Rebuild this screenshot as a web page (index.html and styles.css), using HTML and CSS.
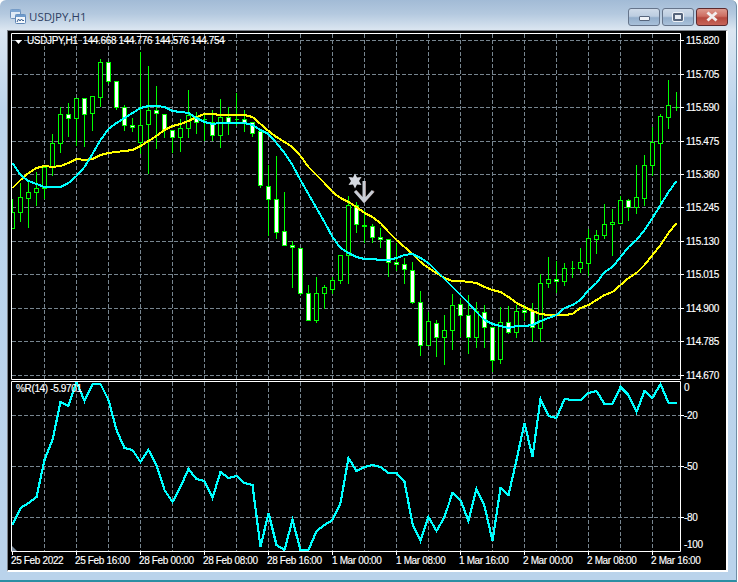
FILE: index.html
```html
<!DOCTYPE html>
<html lang="en">
<head>
<meta charset="utf-8">
<title>USDJPY,H1</title>
<link rel="stylesheet" href="styles.css">
</head>
<body>
<div class="window">
  <header class="titlebar">
    <svg class="app-icon" width="16" height="15" viewBox="0 0 16 15">
      <rect x="0.5" y="0.5" width="10" height="9" rx="1" fill="#dfeaf6" stroke="#6f93bd"/>
      <rect x="0.5" y="0.5" width="10" height="2.5" fill="#7ea6d2"/>
      <rect x="5.5" y="5.5" width="10" height="9" rx="1" fill="#f4f8fc" stroke="#5f86b5"/>
      <rect x="5.5" y="5.5" width="10" height="2.5" fill="#6f9bcc"/>
      <path d="M7 13l1.5-3 1.5 2 1.5-2 1.5 2 1-1" fill="none" stroke="#3a5f8f"/>
    </svg>
    <span class="title">USDJPY,H1</span>
    <div class="controls">
      <button class="ctl"><span class="glyph-min"></span></button>
      <button class="ctl"><span class="glyph-max"></span></button>
      <button class="ctl ctl-close">
        <svg width="14" height="11" viewBox="0 0 14 11"><path d="M2.5 1.5l9 8M11.5 1.5l-9 8" stroke="#f2eeee" stroke-width="3" fill="none"/></svg>
      </button>
    </div>
  </header>
  <main class="panel">
    <svg id="chart" class="chart" width="719" height="541" viewBox="8 31 719 541">
      <defs>
        <clipPath id="main-clip"><rect x="12" y="34" width="668" height="345"/></clipPath>
        <clipPath id="sub-clip"><rect x="12" y="382" width="668" height="169"/></clipPath>
      </defs>
      <g id="grid"></g>
      <g id="candles" clip-path="url(#main-clip)"></g>
      <g id="lines-main" clip-path="url(#main-clip)"></g>
      <g id="lines-sub" clip-path="url(#sub-clip)"></g>

      <g class="marks">
        <polygon class="star" points="355,173.5 357,177.5 361.5,177 359,181 361.5,185 357,184.5 355,188.5 353,184.5 348.5,185 351,181 348.5,177 353,177.5"/>
        <path class="arrow-fringe" d="M365 181v21M356 191l9 10 9-10"/>
        <path class="arrow" d="M364 181v21M355 191l9 10 9-10"/>
      </g>

      <path class="frame" d="M11.5 33.5H680.5V379.5H11.5ZM11.5 381.5H680.5V551.5H11.5Z"/>
      <path id="ticks" class="frame"></path>
      <polygon class="drop" points="15,40 22,40 18.5,44"/>
      <polygon class="shift" points="12,546 17,551 12,551"/>

      <text class="lbl" x="27" y="44">USDJPY,H1  144.668 144.776 144.576 144.754</text>
      <text class="lbl" x="16" y="392">%R(14) -5.9701</text>

      <g class="lbl">
        <text x="686" y="44">115.820</text>
        <text x="686" y="78">115.705</text>
        <text x="686" y="111">115.590</text>
        <text x="686" y="145">115.475</text>
        <text x="686" y="178">115.360</text>
        <text x="686" y="211">115.245</text>
        <text x="686" y="245">115.130</text>
        <text x="686" y="278">115.015</text>
        <text x="686" y="312">114.900</text>
        <text x="686" y="345">114.785</text>
        <text x="686" y="379">114.670</text>
        <text x="684" y="391">0</text>
        <text x="684" y="419">-20</text>
        <text x="684" y="470">-50</text>
        <text x="684" y="521">-80</text>
        <text x="684" y="548">-100</text>
        <text x="11" y="564">25 Feb 2022</text>
        <text x="75" y="564">25 Feb 16:00</text>
        <text x="139" y="564">28 Feb 00:00</text>
        <text x="203" y="564">28 Feb 08:00</text>
        <text x="267" y="564">28 Feb 16:00</text>
        <text x="332" y="564">1 Mar 00:00</text>
        <text x="396" y="564">1 Mar 08:00</text>
        <text x="459" y="564">1 Mar 16:00</text>
        <text x="523" y="564">2 Mar 00:00</text>
        <text x="587" y="564">2 Mar 08:00</text>
        <text x="651" y="564">2 Mar 16:00</text>
      </g>
    </svg>
  </main>
</div>
<script src="chart.js"></script>
</body>
</html>
```
FILE: styles.css
```css
* { box-sizing: border-box; }
html, body { margin: 0; height: 100%; background: #fff; overflow: hidden; }
.window {
  width: 737px;
  height: 582px;
  display: flex;
  flex-direction: column;
  padding: 0 8px 8px 7px;
  border-right: 1px solid #6d8ea6;
  border-bottom: 2px solid #2b8ea3;
  border-radius: 6px 6px 0 0;
  background: linear-gradient(to bottom, #a2bbd6 0, #b4c9df 14px, #dbe6f1 30px, #bcd4ec 110px, #bad3eb 100%);
}
.titlebar {
  height: 30px;
  flex: none;
  display: flex;
  align-items: center;
  padding: 0 0 0 3px;
  gap: 3px;
}
.app-icon { flex: none; margin-top: 3px; }
.title {
  font: 11.5px "Open Sans", "Liberation Sans", sans-serif;
  color: #2f3f63;
  margin-top: 3px;
}
.controls { margin-left: auto; display: flex; gap: 2px; margin-top: 3px; }
.ctl {
  width: 32px;
  height: 18px;
  padding: 0;
  display: flex;
  align-items: center;
  justify-content: center;
  border: 1px solid #66758b;
  border-radius: 3px;
  background: linear-gradient(to bottom, #cfdbe9 0, #bccde0 45%, #93aecb 55%, #a9c1da 100%);
}
.ctl-close {
  border-color: #5c2a2e;
  background: linear-gradient(to bottom, #dd9a8e 0, #cd6e62 45%, #b5493e 55%, #c66458 100%);
}
.glyph-min {
  width: 11px;
  height: 5px;
  margin-top: 3px;
  background: #eef2f7;
  border: 1px solid #56657c;
  border-radius: 1px;
}
.glyph-max {
  width: 10px;
  height: 8px;
  background: #e6ecf3;
  border: 2px solid #56657c;
  outline: 1px solid #eef2f7;
  border-radius: 1px;
}
.panel {
  flex: 1;
  min-height: 0;
  background: #000;
  border-style: solid;
  border-width: 1px 2px 2px 1px;
  border-color: #7b8087 #fff #fff #7b8087;
}
.chart { display: block; }
.grid-line { stroke: #77858f; stroke-width: 1; stroke-dasharray: 4 2; fill: none; }
.wick { stroke: #00ff00; stroke-width: 1; fill: none; shape-rendering: crispEdges; }
.body-bull { stroke: #00ff00; stroke-width: 1; fill: #000; shape-rendering: crispEdges; }
.body-bear { stroke: #00ff00; stroke-width: 1; fill: #fff; shape-rendering: crispEdges; }
.ma { fill: none; stroke-width: 2; shape-rendering: crispEdges; }
.ma-cyan { stroke: #00ffff; }
.ma-yellow { stroke: #ffff00; }
.wpr { fill: none; stroke: #00ffff; stroke-width: 2.2; stroke-linejoin: miter; shape-rendering: crispEdges; }
.frame { stroke: #fff; stroke-width: 1; fill: none; }
.drop { fill: #fff; }
.shift { fill: #778899; }
.star { fill: #d5d9e0; }
.arrow { fill: none; stroke: #c9cdd5; stroke-width: 3; }
.arrow-fringe { fill: none; stroke: #7d5a52; stroke-width: 2; }
.lbl, .lbl text {
  font: 10px "Liberation Sans", Arial, sans-serif;
  letter-spacing: -0.35px;
  fill: #fff;
  stroke: #fff;
  stroke-width: 0.15px;
  white-space: pre;
}
```
FILE: chart.js
```js
var SVG_NS = "http://www.w3.org/2000/svg";

function add(parentId, cls, d) {
  var p = document.createElementNS(SVG_NS, "path");
  p.setAttribute("class", cls);
  p.setAttribute("d", d);
  document.getElementById(parentId).appendChild(p);
}

function xAt(k) { return 12 + 8 * k; }

function polyline(ys) {
  return ys.map(function (y, k) {
    return (k ? "L" : "M") + (xAt(k) + 0.5) + " " + y;
  }).join("");
}

/* grid */
var hMain = [40, 74, 107, 141, 174, 207, 241, 274, 308, 341, 375];
var hSub = [415, 466, 517];
var grid = "";
hMain.concat(hSub).forEach(function (y) { grid += "M12 " + (y + 0.5) + "H680"; });
add("grid", "grid-line", grid);
var gridV = "";
for (var gx = 44; gx <= 676; gx += 32) {
  gridV += "M" + (gx + 0.5) + " 34V379M" + (gx + 0.5) + " 382V551";
}
add("grid", "grid-line", gridV);

/* ticks */
var ticks = "";
hMain.concat(hSub).forEach(function (y) { ticks += "M680 " + (y + 0.5) + "h4"; });
for (var tx = 12; tx <= 652; tx += 64) { ticks += "M" + (tx + 0.5) + " 551v4"; }
document.getElementById("ticks").setAttribute("d", ticks);

/* candles: wickTop, wickBottom, bodyTop, bodyBottom, white body */
var candles = [
[199,228,212,228,0],[183,221,197,212,0],[182,227,192,198,0],[172,205,188,192,0],[165,198,167,188,0],
[134,175,143,167,0],[107,152,114,143,0],[103,136,114,118,1],[98,145,98,118,0],[98,146,98,114,1],
[96,130,96,113,0],[59,106,62,97,0],[62,83,62,81,1],[81,109,81,107,1],[105,130,107,125,1],
[118,131,125,127,1],[52,153,125,142,0],[66,173,110,124,0],[86,148,110,113,1],[114,137,114,129,1],
[130,152,130,137,1],[119,151,128,137,0],[90,137,115,128,0],[112,133,117,122,1],[115,140,119,119,0],
[110,140,122,135,1],[99,147,117,135,0],[107,134,117,122,1],[93,125,119,119,0],[110,131,119,122,1],
[122,136,122,133,1],[131,187,131,185,1],[165,235,186,199,1],[156,238,199,232,1],[192,245,231,245,1],
[241,287,245,247,1],[248,294,248,293,1],[285,320,293,320,1],[277,322,293,320,0],[285,308,287,293,0],
[277,293,280,289,0],[255,283,255,280,0],[196,283,205,255,0],[202,232,205,224,1],[210,242,225,226,1],
[224,242,226,237,1],[228,247,237,239,1],[239,276,239,262,1],[243,270,262,264,1],[258,283,264,269,1],
[262,303,270,302,1],[291,355,302,345,1],[312,345,321,345,0],[320,356,323,337,1],[315,364,330,337,0],
[294,349,305,330,0],[300,336,304,315,1],[295,353,315,337,1],[302,347,311,337,0],[305,347,312,327,1],
[327,371,327,360,1],[307,363,322,359,0],[306,333,322,332,1],[305,337,311,332,0],[305,320,310,312,1],
[303,341,311,327,1],[274,341,283,328,0],[257,287,279,283,0],[261,292,279,281,1],[263,285,268,281,0],
[261,277,268,268,0],[248,272,262,268,0],[229,275,238,263,0],[230,253,235,239,0],[204,238,224,235,0],
[209,255,222,224,0],[196,223,200,223,0],[199,220,200,207,1],[165,213,197,207,0],[155,205,165,198,0],
[127,175,142,165,0],[114,205,116,143,0],[80,128,105,117,0],[92,110,107,107,0]
];
var wicks = "", bull = "", bear = "";
candles.forEach(function (c, k) {
  var x = xAt(k);
  wicks += "M" + (x + 0.5) + " " + c[0] + "V" + (c[1] + 1);
  var box = "M" + (x - 1.5) + " " + (c[2] + 0.5) + "h4v" + (c[3] - c[2]) + "h-4z";
  if (c[4]) { bear += box; } else { bull += box; }
});
add("candles", "wick", wicks);
add("candles", "body-bull", bull);
add("candles", "body-bear", bear);

/* moving averages */
var cyan = [163,175,181,184,187,187,187,183,176,167,154,140,129,123,118,113,108,106,106,107,111,112,113,118,122,124,123,123,123,123,125,130,134,143,153,165,180,194,208,222,237,248,253,257,259,259,260,260,258,255,254,258,263,271,279,287,295,303,312,320,324,326,328,326,326,325,321,318,315,308,305,300,290,283,272,267,257,247,240,230,218,205,192,181];
var yellow = [188,180,173,168,166,167,166,163,159,160,159,155,153,152,151,150,146,141,136,130,126,124,121,117,114,114,115,115,115,115,117,124,131,137,142,147,156,167,175,183,192,198,202,207,213,217,223,232,240,247,254,262,268,273,278,281,281,282,283,287,290,292,297,303,307,311,314,315,315,315,314,308,305,300,295,292,285,278,273,265,255,245,233,223];
add("lines-main", "ma ma-yellow", polyline(yellow));
add("lines-main", "ma ma-cyan", polyline(cyan));

/* %R(14) */
var wpr = [525,508,503,497,460,440,402,406,382,401,384,384,400,430,448,450,462,450,465,490,502,487,469,479,481,498,472,478,476,483,485,547,513,545,550,520,550,550,531,525,520,503,458,471,467,465,467,473,473,482,524,541,517,531,517,493,500,521,489,506,541,488,495,460,423,457,399,416,418,399,400,400,393,391,404,404,387,395,412,391,398,384,403,403];
add("lines-sub", "wpr", polyline(wpr));
```
